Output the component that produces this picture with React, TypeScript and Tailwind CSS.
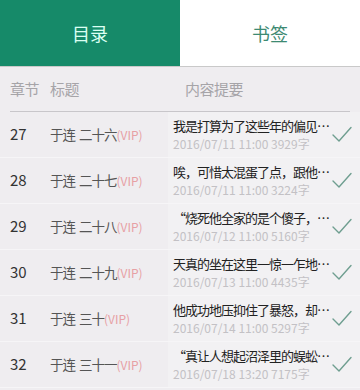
import React from "react";

const rows = [
  { no: 27, title: "于连 二十六", text: "我是打算为了这些年的偏见…", date: "2016/07/11 11:00 3929字" },
  { no: 28, title: "于连 二十七", text: "唉，可惜太混蛋了点，跟他…", date: "2016/07/11 11:00 3224字" },
  { no: 29, title: "于连 二十八", text: "“烧死他全家的是个傻子，…", date: "2016/07/12 11:00 5160字" },
  { no: 30, title: "于连 二十九", text: "天真的坐在这里一惊一乍地…", date: "2016/07/13 11:00 4435字" },
  { no: 31, title: "于连 三十", text: "他成功地压抑住了暴怒，却…", date: "2016/07/14 11:00 5297字" },
  { no: 32, title: "于连 三十一", text: "“真让人想起沼泽里的蜈蚣…", date: "2016/07/18 13:20 7175字" },
];

function Check() {
  return (
    <svg width="20" height="17" viewBox="0 0 20 17" fill="none">
      <path d="M1 9 L7 15 L19 1.5" stroke="#6f9e90" strokeWidth="1.4" strokeLinecap="round" strokeLinejoin="round" />
    </svg>
  );
}

export default function App() {
  return (
    <div
      className="w-[360px] h-[390px] overflow-hidden bg-[#efedf0]"
      style={{ fontFamily: '"Noto Sans CJK SC", "Noto Sans", sans-serif' }}
    >
      {/* Tabs */}
      <div className="flex h-[67px] border-b border-[#c9c9c9]">
        <div className="w-[180px] bg-[#168a69] flex items-center justify-center text-[18px] text-[#dcfff3]">
          目录
        </div>
        <div className="flex-1 bg-white flex items-center justify-center text-[18px] text-[#3d8a72]">
          书签
        </div>
      </div>

      {/* Column header */}
      <div className="mx-[10px] h-[45px] flex items-center border-b border-[#c8c6ca] text-[15px] text-[#a6a4a8]">
        <span className="w-[40px] tracking-[-0.5px]">章节</span>
        <span className="w-[135px] tracking-[-0.5px]">标题</span>
        <span className="tracking-[-0.5px]">内容提要</span>
      </div>

      {/* Rows */}
      {rows.map((r) => {
        const [name, ch] = r.title.split(" ");
        return (
          <div key={r.no} className="h-[46px] flex items-center border-b border-[#f6f5f7]">
            <span className="w-[50px] pl-[10px] text-[15px] text-[#333]">{r.no}</span>
            <span className="w-[118px] flex items-baseline gap-[4px] text-[13.5px] text-[#555] whitespace-nowrap tracking-[-1px]">
              <span>{name}</span>
              <span>
                {ch}
                <span className="text-[12px] text-[#e7a0a4] tracking-normal">(VIP)</span>
              </span>
            </span>
            <div className="h-full flex-1 flex items-center bg-[#f2f1f3] pl-[5px] pr-[8px]">
              <div className="flex flex-col leading-tight">
                <span className="text-[13px] text-[#222] whitespace-nowrap tracking-[-1px]">{r.text}</span>
                <span className="text-[12px] text-[#c3c1c5] whitespace-nowrap mt-[2px]">{r.date}</span>
              </div>
              <div className="ml-auto">
                <Check />
              </div>
            </div>
          </div>
        );
      })}
    </div>
  );
}
